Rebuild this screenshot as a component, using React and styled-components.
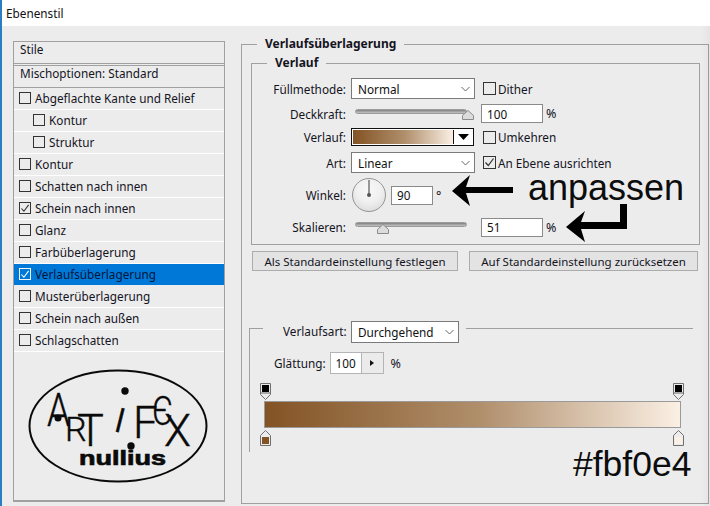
import React from "react";
import styled, { createGlobalStyle } from "styled-components";

const Global = createGlobalStyle`
  html, body { margin: 0; padding: 0; background: #ececec; }
  body { width: 710px; height: 506px; overflow: hidden; font-family: "Noto Sans", "Liberation Sans", sans-serif; font-size: 11.75px; color: #14141e; }
  * { box-sizing: border-box; }
`;

const Win = styled.div`
  position: relative;
  width: 710px;
  height: 506px;
  display: flex;
  flex-direction: column;
  background: #ececec;
  border-left: 2px solid #2b7cc0;
  overflow: hidden;
`;
const TitleBar = styled.div`
  height: 26px;
  flex: none;
  background: #fff;
  padding-left: 4px;
  display: flex;
  align-items: center;
  color: #111;
`;
const Body = styled.div`
  flex: 1;
  display: flex;
  align-items: flex-start;
  padding: 15px 0 0 11px;
  gap: 16px;
`;

const Sidebar = styled.div`
  width: 212px;
  height: 461px;
  flex: none;
  border: 1px solid #a0a0a0;
  border-bottom-width: 2px;
  display: flex;
  flex-direction: column;
`;
const HeadRow = styled.div`
  height: ${p => p.$h}px;
  flex: none;
  padding-left: 6px;
  border-bottom: 1px solid #a0a0a0;
  border-top: ${p => (p.$top ? "1px solid #a0a0a0" : "0")};
  margin-bottom: ${p => p.$gap || 0}px;
  line-height: 15px;
`;
const StyleRow = styled.div`
  height: 22px;
  flex: none;
  display: flex;
  align-items: center;
  gap: 4px;
  padding-left: ${p => (p.$nested ? 19 : 5)}px;
  padding-bottom: 1px;
  border-bottom: 1px solid ${p => (p.$active ? "#ececec" : "#fff")};
  background: ${p => (p.$active ? "#0078d7" : "transparent")};
  color: ${p => (p.$active ? "#04163a" : "#14141e")};
`;
const Box = styled.span`
  width: 12px;
  height: 12px;
  flex: none;
  display: inline-flex;
  border: 1px solid ${p => (p.$light ? "#f4f4f4" : "#333")};
  background: transparent;
`;
const LogoWrap = styled.svg`
  display: block;
  margin: 15px 0 0 12px;
  width: 184px;
  height: 117px;
`;

const Main = styled.fieldset`
  width: 468px;
  height: 468px;
  flex: none;
  margin: -5px 0 0;
  padding: 0 8px 0 9px;
  border: 1px solid #a0a0a0;
  min-width: 0;
`;
const MainLegend = styled.legend`
  margin-left: 6px;
  padding: 0 8px;
  font-weight: 700;
  font-size: 12px;
  color: #14141e;
  line-height: 16px;
`;
const Inner = styled.fieldset`
  width: 449px;
  height: 190px;
  margin: 3px 0 0;
  padding: 0;
  border: 1px solid #a0a0a0;
  min-width: 0;
`;
const InnerLegend = styled(MainLegend)`
  margin-left: 15px;
`;
const Form = styled.div`
  display: flex;
  flex-direction: column;
`;
const Row = styled.div`
  height: ${p => p.$h}px;
  margin-top: ${p => p.$mt || 0}px;
  display: flex;
  align-items: center;
`;
const Label = styled.span`
  width: 94px;
  flex: none;
  text-align: right;
  margin-right: 5px;
  white-space: nowrap;
`;
const Select = styled.div`
  width: ${p => p.$w || 124}px;
  height: ${p => p.$h || 21}px;
  flex: none;
  background: #fff;
  border: 1px solid #7a7a7a;
  display: flex;
  align-items: center;
  justify-content: space-between;
  padding: 0 4px 0 6px;
  color: #111;
`;
const Chevron = () => (
  <svg width="9" height="6" viewBox="0 0 9 6"><path d="M0.5 1 L4.5 5 L8.5 1" fill="none" stroke="#666" strokeWidth="1" /></svg>
);
const CheckLabel = styled.label`
  margin-left: ${p => p.$ml || 8}px;
  display: flex;
  align-items: center;
  gap: 2px;
`;
const FormBox = styled(Box)`
  width: 13px;
  height: 13px;
`;
const SliderWrap = styled.div`
  position: relative;
  width: 112px;
  height: 5px;
  margin: ${p => p.$up}px 14px 0 4px;
  flex: none;
  border-radius: 3px;
  background: linear-gradient(#808080, #c4c4c4);
  border: 1px solid #9a9a9a;
`;
const Thumb = styled.svg`
  position: absolute;
  left: ${p => p.$x}px;
  top: ${p => p.$y}px;
`;
const TextBox = styled.div`
  width: ${p => p.$w || 62}px;
  height: ${p => p.$h || 19}px;
  flex: none;
  background: #fff;
  border: 1px solid #8a8a8a;
  padding-left: 5px;
  display: flex;
  align-items: center;
  color: #111;
`;
const Unit = styled.span`
  margin-left: 3px;
  font-size: 12.5px;
`;
const GradientField = styled.div`
  width: 123px;
  height: 18px;
  flex: none;
  display: flex;
  border: 1px solid #111;
  background: #fff;
  padding: 1px;
  gap: 1px;
`;
const GradSwatch = styled.div`
  flex: 1;
  background: linear-gradient(to right, #835324, #b08f6c 52%, #fbf0e4);
  border-right: 1px solid #111;
  margin: 0;
`;
const GradCaret = styled.div`
  width: 17px;
  display: flex;
  align-items: center;
  justify-content: center;
`;
const Dial = styled.div`
  width: 34px;
  height: 34px;
  flex: none;
  margin: 0 5px 0 1px;
  border-radius: 50%;
  border: 1px solid #949494;
  background: radial-gradient(circle at 50% 35%, #f8f8f8, #f0f0f0 45%, #d4d4d4);
`;
const Buttons = styled.div`
  display: flex;
  gap: 11px;
  margin: 6px 0 0 1px;
`;
const Btn = styled.div`
  width: ${p => p.$w}px;
  height: 20px;
  flex: none;
  background: #e3e3e3;
  border: 1px solid #acacac;
  display: flex;
  align-items: center;
  justify-content: center;
  color: #14141e;
  font-size: 11.5px;
  white-space: nowrap;
`;
const GradSection = styled.fieldset`
  width: 444px;
  height: 131px;
  margin: 50px 0 0 -2px;
  padding: 0;
  border: 0 solid #a0a0a0;
  border-top-width: 1px;
  border-left-width: 1px;
  min-width: 0;
`;
const GradLegend = styled.legend`
  margin-left: 13px;
  padding: 0 7px 0 20px;
  display: flex;
  align-items: flex-start;
  gap: 5px;
  height: 14px;
`;
const LegendLabel = styled.span`
  width: 63px;
  text-align: right;
  line-height: 21px;
  white-space: nowrap;
`;
const Smooth = styled.div`
  display: flex;
  align-items: center;
  margin: 17px 0 0 24px;
  gap: 4px;
`;
const Stepper = styled.div`
  width: 54px;
  height: 22px;
  display: flex;
  background: #fff;
  border: 1px solid #b4b4b4;
`;
const StepVal = styled.div`
  width: 31px;
  display: flex;
  align-items: center;
  justify-content: center;
  color: #111;
  border-right: 1px solid #b4b4b4;
`;
const StepBtn = styled.div`
  flex: 1;
  background: #ebebeb;
  display: flex;
  align-items: center;
  justify-content: center;
`;
const StopRow = styled.div`
  width: 424px;
  margin-left: 10px;
  display: flex;
  justify-content: space-between;
  margin-top: ${p => p.$mt || 0}px;
  height: ${p => p.$h}px;
`;
const GradBar = styled.div`
  width: 417px;
  height: 27px;
  margin: 1px 0 2px 14px;
  border: 1px solid #9a9a9a;
  background: linear-gradient(to right, #835324, #b08f6c 52%, #fbf0e4);
`;
const Big = styled.div`
  position: absolute;
  left: ${p => p.$x}px;
  top: ${p => p.$y}px;
  font-family: "Liberation Sans", Arial, sans-serif;
  font-size: ${p => p.$s}px;
  line-height: 1;
  color: #0d0d0d;
  white-space: nowrap;
`;
const Arrows = styled.svg`
  position: absolute;
  left: 438px;
  top: 165px;
`;
const RightShade = styled.div`
  position: absolute;
  right: 0;
  top: 26px;
  bottom: 0;
  width: 9px;
  background: linear-gradient(to right, rgba(0,0,0,0), rgba(0,0,0,0.035));
  pointer-events: none;
`;
const LogoText = styled.text`
  font-family: Roboto, "Liberation Sans", sans-serif;
  font-weight: 300;
  fill: #0a0a0a;
  stroke: #0a0a0a;
  stroke-width: 0.4;
`;
const LogoBold = styled.text`
  font-family: "Liberation Sans", sans-serif;
  font-weight: 700;
  fill: #0a0a0a;
  stroke: #0a0a0a;
  stroke-width: 0.7;
`;

const Check = ({ c = "#333" }) => (
  <svg width="11" height="11" viewBox="0 0 11 11"><path d="M1.5 5.5 L4.3 8.5 L9.5 1.5" fill="none" stroke={c} strokeWidth="1.2" /></svg>
);

const stylesList = [
  ["Abgeflachte Kante und Relief"],
  ["Kontur", true],
  ["Struktur", true],
  ["Kontur"],
  ["Schatten nach innen"],
  ["Schein nach innen", false, true],
  ["Glanz"],
  ["Farbüberlagerung"],
  ["Verlaufsüberlagerung", false, true, true],
  ["Musterüberlagerung"],
  ["Schein nach außen"],
  ["Schlagschatten"],
];

const ThumbIcon = ({ x, y }) => (
  <Thumb $x={x} $y={y} width="12" height="10" viewBox="0 0 12 10">
    <path d="M6 0.5 L11.5 5.5 V9.5 H0.5 V5.5 Z" fill="#dcdcdc" stroke="#8a8a8a" />
  </Thumb>
);
const TopStop = () => (
  <svg width="11" height="17" viewBox="0 0 11 17">
    <path d="M0.5 0.5 H10.5 V11.5 L5.5 16.5 L0.5 11.5 Z" fill="#ececec" stroke="#707070" />
    <rect x="2" y="2" width="7" height="7" fill="#000" />
    <rect x="1" y="9" width="9" height="2" fill="#a8a8a8" />
  </svg>
);
const BottomStop = ({ c }) => (
  <svg width="11" height="16" viewBox="0 0 11 16">
    <path d="M0.5 15.5 H10.5 V5.5 L5.5 0.5 L0.5 5.5 Z" fill="#ececec" stroke="#707070" />
    <rect x="2" y="7" width="7" height="7" fill={c} />
  </svg>
);

const Logo = () => (
  <LogoWrap viewBox="26 366 184 117">
    <ellipse cx="118" cy="425" rx="88.5" ry="55.5" fill="none" stroke="#0a0a0a" strokeWidth="2" />
    <circle cx="58" cy="417" r="3.5" fill="#0a0a0a" />
    <circle cx="125" cy="390" r="3.7" fill="#0a0a0a" />
    <circle cx="131" cy="445" r="3.7" fill="#0a0a0a" />
    <LogoText x="47" y="425" fontSize="46" transform="translate(47 425) scale(0.8 1) translate(-47 -425)">A</LogoText>
    <LogoText x="65" y="440" fontSize="34">R</LogoText>
    <LogoText x="77" y="445" fontSize="45">T</LogoText>
    <LogoText x="112" y="431" fontSize="46" transform="rotate(14 117 431)">ı</LogoText>
    <LogoText x="133" y="437" fontSize="44" >F</LogoText>
    <LogoText x="152" y="424" fontSize="40" transform="translate(152 424) scale(0.8 1) translate(-152 -424)">Є</LogoText>
    <LogoText x="164" y="445" fontSize="44">X</LogoText>
    <LogoBold x="79" y="464" fontSize="20" textLength="87" lengthAdjust="spacingAndGlyphs">nullius</LogoBold>
  </LogoWrap>
);

export default function App() {
  return (
    <>
      <Global />
      <Win>
        <TitleBar>Ebenenstil</TitleBar>
        <Body>
          <Sidebar>
            <HeadRow $h={22} $gap={1}>Stile</HeadRow>
            <HeadRow $h={23} $top>Mischoptionen: Standard</HeadRow>
            {stylesList.map(([t, nested, checked, active]) => (
              <StyleRow key={t + nested} $nested={nested} $active={active}>
                <Box $light={active}>{checked && <Check c={active ? "#fff" : "#333"} />}</Box>
                {t}
              </StyleRow>
            ))}
            <Logo />
          </Sidebar>
          <Main>
            <MainLegend>Verlaufsüberlagerung</MainLegend>
            <Inner>
              <InnerLegend>Verlauf</InnerLegend>
              <Form>
                <Row $h={21} $mt={7}>
                  <Label>Füllmethode:</Label>
                  <Select>Normal<Chevron /></Select>
                  <CheckLabel><FormBox />Dither</CheckLabel>
                </Row>
                <Row $h={19} $mt={5}>
                  <Label>Deckkraft:</Label>
                  <SliderWrap $up={-4}><ThumbIcon x={106} y={0} /></SliderWrap>
                  <TextBox>100</TextBox>
                  <Unit>%</Unit>
                </Row>
                <Row $h={18} $mt={5}>
                  <Label>Verlauf:</Label>
                  <GradientField>
                    <GradSwatch />
                    <GradCaret>
                      <svg width="11" height="6" viewBox="0 0 11 6"><path d="M0 0 H11 L5.5 6 Z" fill="#000" /></svg>
                    </GradCaret>
                  </GradientField>
                  <CheckLabel $ml={9}><FormBox />Umkehren</CheckLabel>
                </Row>
                <Row $h={21} $mt={6}>
                  <Label>Art:</Label>
                  <Select>Linear<Chevron /></Select>
                  <CheckLabel><FormBox><Check /></FormBox>An Ebene ausrichten</CheckLabel>
                </Row>
                <Row $h={34} $mt={5}>
                  <Label>Winkel:</Label>
                  <Dial>
                    <svg width="32" height="32" viewBox="0 0 32 32"><path d="M16 16 V1" stroke="#777" strokeWidth="1.5" /><circle cx="16" cy="16" r="2" fill="#555" /></svg>
                  </Dial>
                  <TextBox $w={42}>90</TextBox>
                  <Unit>°</Unit>
                </Row>
                <Row $h={20} $mt={5}>
                  <Label>Skalieren:</Label>
                  <SliderWrap $up={-5}><ThumbIcon x={21} y={1} /></SliderWrap>
                  <TextBox>51</TextBox>
                  <Unit>%</Unit>
                </Row>
              </Form>
            </Inner>
            <Buttons>
              <Btn $w={206}>Als Standardeinstellung festlegen</Btn>
              <Btn $w={229}>Auf Standardeinstellung zurücksetzen</Btn>
            </Buttons>
            <GradSection>
              <GradLegend>
                <LegendLabel>Verlaufsart:</LegendLabel>
                <Select $w={108} $h={22}>Durchgehend<Chevron /></Select>
              </GradLegend>
              <Smooth>
                <span>Glättung:</span>
                <Stepper>
                  <StepVal>100</StepVal>
                  <StepBtn><svg width="4" height="6" viewBox="0 0 4 6"><path d="M0 0 L4 3 L0 6 Z" fill="#111" /></svg></StepBtn>
                </Stepper>
                <Unit>%</Unit>
              </Smooth>
              <StopRow $h={17} $mt={9}><TopStop /><TopStop /></StopRow>
              <GradBar />
              <StopRow $h={16}><BottomStop c="#835324" /><BottomStop c="#fbf0e4" /></StopRow>
            </GradSection>
          </Main>
        </Body>
        <Big $x={526} $y={170} $s={36}>anpassen</Big>
        <Big $x={571} $y={447} $s={35.5}>#fbf0e4</Big>
        <Arrows width="200" height="90" viewBox="0 0 200 90">
          <path d="M12 26 L30 10 L26 22 H73 V28 H26 L30 41 Z" fill="#000" />
          <path d="M126 62 L145 46 L141 57 H180 V39 H187 V64 H141 L145 77 Z" fill="#000" />
        </Arrows>
        <RightShade />
      </Win>
    </>
  );
}
